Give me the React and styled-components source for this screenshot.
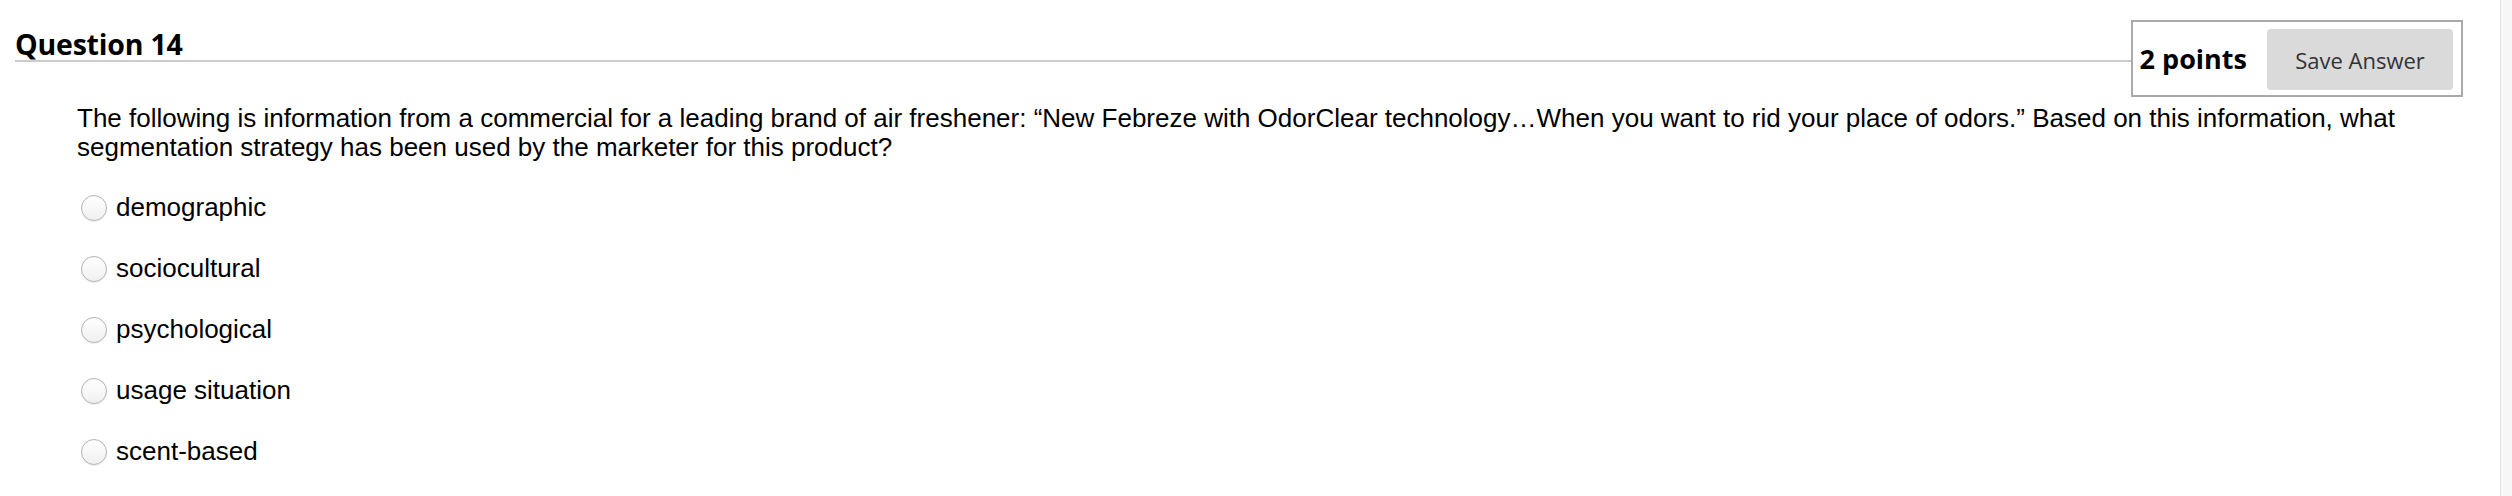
import React from "react";
import styled, { createGlobalStyle } from "styled-components";

const Global = createGlobalStyle`
  html, body { margin: 0; padding: 0; background: #fff; }
  body { font-family: "Liberation Sans", Arial, sans-serif; color: #000; }
`;

const Page = styled.div`
  display: flex;
  width: 2512px;
  height: 496px;
  overflow: hidden;
`;

const Main = styled.div`
  flex: 1;
  display: flex;
  flex-direction: column;
`;

const SideStrip = styled.div`
  width: 11px;
  background: #f7f7f7;
  border-left: 1px solid #e3e3e3;
`;

const HeaderRow = styled.div`
  display: flex;
  align-items: flex-start;
  padding: 20px 37px 0 15px;
`;

const Title = styled.h3`
  flex: 1;
  margin: 0;
  height: 42px;
  box-sizing: border-box;
  display: flex;
  align-items: flex-end;
  border-bottom: 2px solid #cccccc;
  font-family: "Open Sans", sans-serif;
  font-weight: 700;
  font-size: 28.5px;
  line-height: 1;
  padding-bottom: 2px;
  letter-spacing: -0.2px;
`;

const PointsBox = styled.div`
  display: flex;
  align-items: center;
  gap: 20px;
  height: 77px;
  box-sizing: border-box;
  border: 2px solid #aaaaaa;
  padding: 0 8px 0 7px;
`;

const Points = styled.span`
  font-family: "Open Sans", sans-serif;
  font-weight: 700;
  font-size: 27px;
`;

const SaveButton = styled.button`
  width: 186px;
  height: 61px;
  margin-top: 2px;
  border: none;
  border-radius: 4px;
  background: #dadada;
  color: #333;
  font-family: "Open Sans", sans-serif;
  font-size: 22px;
  padding: 0;
`;

const Body = styled.div`
  padding: 7px 60px 0 77px;
`;

const Prompt = styled.p`
  margin: 0;
  font-size: 26px;
  line-height: 29px;
`;

const Options = styled.div`
  display: flex;
  flex-direction: column;
  margin-top: 15px;
  margin-left: 4px;
`;

const Option = styled.label`
  display: flex;
  align-items: center;
  gap: 9px;
  height: 61px;
  font-size: 26px;
`;

const Radio = styled.span`
  flex: none;
  width: 26px;
  height: 26px;
  box-sizing: border-box;
  border-radius: 50%;
  border: 1px solid #b3b3b3;
  background: linear-gradient(#ffffff, #f0f0f0);
  box-shadow: 0 1px 1px rgba(0, 0, 0, 0.08);
`;

const options = ["demographic", "sociocultural", "psychological", "usage situation", "scent-based"];

export default function App() {
  return (
    <>
      <Global />
      <Page>
        <Main>
          <HeaderRow>
            <Title>Question 14</Title>
            <PointsBox>
              <Points>2 points</Points>
              <SaveButton>Save Answer</SaveButton>
            </PointsBox>
          </HeaderRow>
          <Body>
            <Prompt>
              The following is information from a commercial for a leading brand of air freshener: “New Febreze with OdorClear technology…When you want to rid your place of odors.” Based on this information, what segmentation strategy has been used by the marketer for this product?
            </Prompt>
            <Options>
              {options.map((o) => (
                <Option key={o}>
                  <Radio />
                  {o}
                </Option>
              ))}
            </Options>
          </Body>
        </Main>
        <SideStrip />
      </Page>
    </>
  );
}
